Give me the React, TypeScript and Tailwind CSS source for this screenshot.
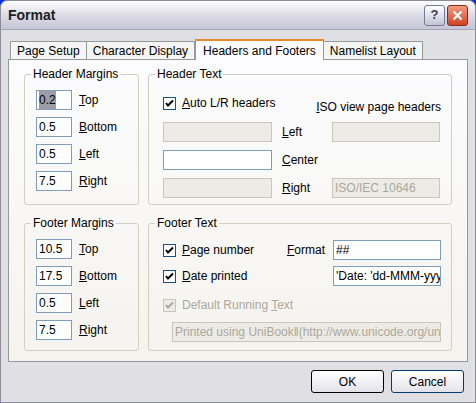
import React from 'react';

const font = { fontFamily: '"Liberation Sans", Arial, sans-serif' };

function Field({ value = '', w = 'w-[36px]', disabled = false, sel = false }: { value?: string; w?: string; disabled?: boolean; sel?: boolean }) {
  return (
    <div className={`${w} h-[20px] border border-[#7f9db9] px-[2px] flex items-center text-[12px] overflow-hidden whitespace-nowrap ${disabled ? 'bg-[#ecebe6] text-[#aca899] border-[#c9c7ba]' : 'bg-white text-black'}`}>
      {sel ? <span className="bg-[#9c9ca8] text-black">{value}</span> : value}
    </div>
  );
}

function Check({ label, disabled = false }: { label: React.ReactNode; disabled?: boolean }) {
  return (
    <div className={`flex items-center gap-[6px] text-[12px] ${disabled ? 'text-[#aca899]' : 'text-black'}`}>
      <div className={`w-[13px] h-[13px] border flex items-center justify-center ${disabled ? 'border-[#c9c7ba] bg-[#ecebe6]' : 'border-[#1c5180] bg-white'}`}>
        <svg width="9" height="9" viewBox="0 0 9 9"><path d="M1 4 L3 6.5 L8 1.5" stroke={disabled ? '#aca899' : '#000'} strokeWidth="2" fill="none" /></svg>
      </div>
      {label}
    </div>
  );
}

function Group({ title, className, children }: { title: string; className: string; children: React.ReactNode }) {
  return (
    <fieldset className={`border border-[#d0d0bf] rounded-[3px] ${className}`}>
      <legend className="ml-[6px] px-[2px] text-[12px] text-black leading-none">{title}</legend>
      {children}
    </fieldset>
  );
}

const U = ({ c }: { c: string }) => <span className="underline">{c}</span>;

function MarginRows({ rows }: { rows: [string, string, string, boolean?][] }) {
  return (
    <div className="flex flex-col gap-[7px] pl-[11px] pt-[10px]">
      {rows.map(([v, k, rest, sel]) => (
        <div key={k + rest} className="flex items-center gap-[7px] text-[12px]">
          <Field value={v} sel={sel} />
          <span><U c={k} />{rest}</span>
        </div>
      ))}
    </div>
  );
}

export default function App() {
  return (
    <div style={font} className="w-[476px] h-[403px] bg-[#0831d9] p-0 overflow-hidden">
      <div className="w-full h-full flex flex-col bg-[#e0dfe3] border border-[#8d8c99] rounded-t-[7px]">
        <div className="h-[29px] flex items-center justify-between px-[7px] rounded-t-[7px] bg-gradient-to-b from-[#fdfdfe] via-[#dddce5] to-[#c6c5d7] border-b border-[#a7a6b8]">
          <span className="text-[14px] font-bold text-[#202020]">Format</span>
          <div className="flex gap-[2px]">
            <div className="w-[21px] h-[21px] rounded-[3px] border border-[#7a7993] bg-gradient-to-b from-[#ffffff] to-[#c5c4d6] flex items-center justify-center text-[13px] font-bold text-[#3d3d5c]">?</div>
            <div className="w-[21px] h-[21px] rounded-[3px] border border-[#8a2a1a] bg-gradient-to-b from-[#f09a80] to-[#d1401e] flex items-center justify-center">
              <svg width="11" height="11" viewBox="0 0 11 11"><path d="M1.5 1.5 L9.5 9.5 M9.5 1.5 L1.5 9.5" stroke="white" strokeWidth="2.2" /></svg>
            </div>
          </div>
        </div>
        <div className="flex-1 px-[7px] pt-[8px] flex flex-col">
          <div className="flex items-end h-[21px] text-[12px] pl-[2px]">
            <div className="h-[18px] px-[6px] border border-b-0 border-[#919b9c] bg-[#f5f5f3] flex items-center">Page Setup</div>
            <div className="h-[18px] px-[6px] border border-b-0 border-l-0 border-[#919b9c] bg-[#f5f5f3] flex items-center">Character Display</div>
            <div className="h-[21px] px-[7px] border border-b-0 border-[#919b9c] border-t-2 border-t-[#e68b2c] bg-[#fcfcfe] flex items-center -mb-px z-10">Headers and Footers</div>
            <div className="h-[18px] px-[6px] border border-b-0 border-l-0 border-[#919b9c] bg-[#f5f5f3] flex items-center">Namelist Layout</div>
          </div>
          <div className="h-[303px] border border-[#919b9c] bg-gradient-to-b from-[#fcfcfe] to-[#f4f3ee] px-[15px] pt-[8px] grid grid-cols-[115px_304px] gap-x-[9px] gap-y-[2px]">
            <Group title="Header Margins" className="h-[137px]">
              <MarginRows rows={[['0.2', 'T', 'op', true], ['0.5', 'B', 'ottom'], ['0.5', 'L', 'eft'], ['7.5', 'R', 'ight']]} />
            </Group>
            <Group title="Header Text" className="h-[137px]">
              <div className="pl-[14px] pt-[8px] text-[12px]">
                <div className="flex justify-between items-center pr-[10px]">
                  <div className="pt-[2px]"><Check label={<span><U c="A" />uto L/R headers</span>} /></div>
                  <span className="pt-[10px]"><U c="I" />SO view page headers</span>
                </div>
                <div className="flex flex-col gap-[8px] mt-[6px]">
                  {[['L', 'eft', false, 'ISO'], ['C', 'enter', true, null], ['R', 'ight', false, 'ISO/IEC 10646']].map(([k, r, en, iso]) => (
                    <div key={k as string} className="flex items-center">
                      <Field w="w-[109px]" disabled={!en} />
                      <span className="ml-[10px] w-[50px]"><U c={k as string} />{r as string}</span>
                      {iso && <Field w="w-[108px]" disabled value={iso === 'ISO' ? '' : (iso as string)} />}
                    </div>
                  ))}
                </div>
              </div>
            </Group>
            <Group title="Footer Margins" className="h-[134px]">
              <MarginRows rows={[['10.5', 'T', 'op'], ['17.5', 'B', 'ottom'], ['0.5', 'L', 'eft'], ['7.5', 'R', 'ight']]} />
            </Group>
            <Group title="Footer Text" className="h-[134px]">
              <div className="pl-[14px] pt-[11px] text-[12px] flex flex-col gap-[6px]">
                <div className="flex items-center">
                  <div className="w-[124px]"><Check label={<span><U c="P" />age number</span>} /></div>
                  <span className="w-[46px]"><U c="F" />ormat</span>
                  <Field w="w-[108px]" value="##" />
                </div>
                <div className="flex items-center">
                  <div className="w-[170px]"><Check label={<span><U c="D" />ate printed</span>} /></div>
                  <Field w="w-[108px]" value="'Date: 'dd-MMM-yyyy" />
                </div>
                <div className="mt-[4px]"><Check disabled label={<span>Default Running <U c="T" />ext</span>} /></div>
                <div className="pl-[9px] mt-[2px]"><Field w="w-[269px]" disabled value="Printed using UniBook‖(http://www.unicode.org/unibook" /></div>
              </div>
            </Group>
          </div>
          <div className="flex justify-end gap-[7px] pt-[8px] pr-[4px] text-[12px]">
            <div className="w-[73px] h-[23px] rounded-[3px] border border-black bg-gradient-to-b from-white to-[#e3e2ea] flex items-center justify-center">OK</div>
            <div className="w-[73px] h-[23px] rounded-[3px] border border-[#003c74] bg-gradient-to-b from-white to-[#e3e2ea] flex items-center justify-center">Cancel</div>
          </div>
        </div>
      </div>
    </div>
  );
}
